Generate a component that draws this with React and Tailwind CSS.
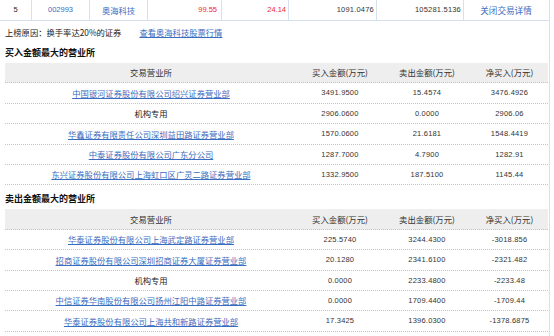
import React from "react";

const CN = "font-['Noto_Sans_CJK_SC','Noto_Sans',sans-serif]";
const NUM = "font-['Liberation_Sans',Arial,sans-serif]";

const buy = [
  ["中国银河证券股份有限公司绍兴证券营业部", true, "3491.9500", "15.4574", "3476.4926"],
  ["机构专用", false, "2906.0600", "0.0000", "2906.06"],
  ["华鑫证券有限责任公司深圳益田路证券营业部", true, "1570.0600", "21.6181", "1548.4419"],
  ["中泰证券股份有限公司广东分公司", true, "1287.7000", "4.7900", "1282.91"],
  ["东兴证券股份有限公司上海虹口区广灵二路证券营业部", true, "1332.9500", "187.5100", "1145.44"],
];

const sell = [
  ["华泰证券股份有限公司上海武定路证券营业部", true, "225.5740", "3244.4300", "-3018.856"],
  ["招商证券股份有限公司深圳招商证券大厦证券营业部", true, "20.1280", "2341.6100", "-2321.482"],
  ["机构专用", false, "0.0000", "2233.4800", "-2233.48"],
  ["中信证券华南股份有限公司扬州江阳中路证券营业部", true, "0.0000", "1709.4400", "-1709.44"],
  ["华泰证券股份有限公司上海共和新路证券营业部", true, "17.3425", "1396.0300", "-1378.6875"],
];

function Table({ rows }) {
  const num = `text-center text-[7.5px] tracking-[0.2px] ${NUM}`;
  return (
    <div className="ml-[5px] w-[543px]">
      <div className={`grid h-[20.4px] grid-cols-[292px_86px_88px_77px] items-center border-b border-dotted border-[#c4c4c4] bg-[#eeeeee] text-[8.4px] text-[#333] ${CN}`}>
        <div className="text-center">交易营业所</div>
        <div className="text-center">买入金额(万元)</div>
        <div className="text-center">卖出金额(万元)</div>
        <div className="text-center">净买入(万元)</div>
      </div>
      {rows.map((r, i) => (
        <div key={i} className="grid h-[20.4px] grid-cols-[292px_86px_88px_77px] items-center border-b border-dotted border-[#c4c4c4] text-[#333]">
          <div className={`text-center text-[8.3px] ${CN}`}>
            {r[1] ? (
              <span className="text-[#3a6cc0] underline">{r[0]}</span>
            ) : (
              <span className="text-[#222]">{r[0]}</span>
            )}
          </div>
          <div className={num}>{r[2]}</div>
          <div className={num}>{r[3]}</div>
          <div className={num}>{r[4]}</div>
        </div>
      ))}
    </div>
  );
}

export default function App() {
  const cell = "flex h-full items-center border-r border-[#d5e1ee]";
  return (
    <div className="h-[336px] w-[550px] border-r border-[#d5e1ee] bg-white">
      <div className="flex h-[21px] border-b border-[#d5e1ee]">
        <div className={`${cell} w-[32px] justify-center text-[7.5px] text-[#222] ${NUM}`}>5</div>
        <div className={`${cell} w-[58px] justify-center text-[7.5px] text-[#3a6cc0] ${NUM}`}>002993</div>
        <div className={`${cell} w-[58px] justify-center text-[8.3px] text-[#3a6cc0] ${CN}`}>奥海科技</div>
        <div className={`${cell} w-[74px] justify-end pr-[4px] text-[7.5px] text-[#f02a2a] ${NUM}`}>99.55</div>
        <div className={`${cell} w-[67px] justify-end pr-[2px] text-[7.5px] text-[#f02a2a] ${NUM}`}>24.14</div>
        <div className={`${cell} w-[88px] justify-end pr-[2px] text-[7.5px] tracking-[0.2px] text-[#333] ${NUM}`}>1091.0476</div>
        <div className={`${cell} w-[87px] justify-end pr-[2px] text-[7.5px] tracking-[0.2px] text-[#333] ${NUM}`}>105281.5136</div>
        <div className={`flex h-full w-[84px] items-center justify-center text-[8.6px] text-[#3a6cc0] ${CN}`}>关闭交易详情</div>
      </div>
      <div className={`flex h-[22px] items-center pl-[5px] text-[8.3px] text-[#222] ${CN}`}>
        <span>上榜原因：换手率达20%的证券</span>
        <span className="ml-[18px] text-[#3a6cc0] underline">查看奥海科技股票行情</span>
      </div>
      <div className={`flex h-[20px] items-center pl-[5px] text-[9px] font-bold text-[#111] ${CN}`}>
        买入金额最大的营业所
      </div>
      <Table rows={buy} />
      <div className={`flex h-[24px] items-center pl-[5px] pt-[3px] text-[9px] font-bold text-[#111] ${CN}`}>
        卖出金额最大的营业所
      </div>
      <Table rows={sell} />
    </div>
  );
}
